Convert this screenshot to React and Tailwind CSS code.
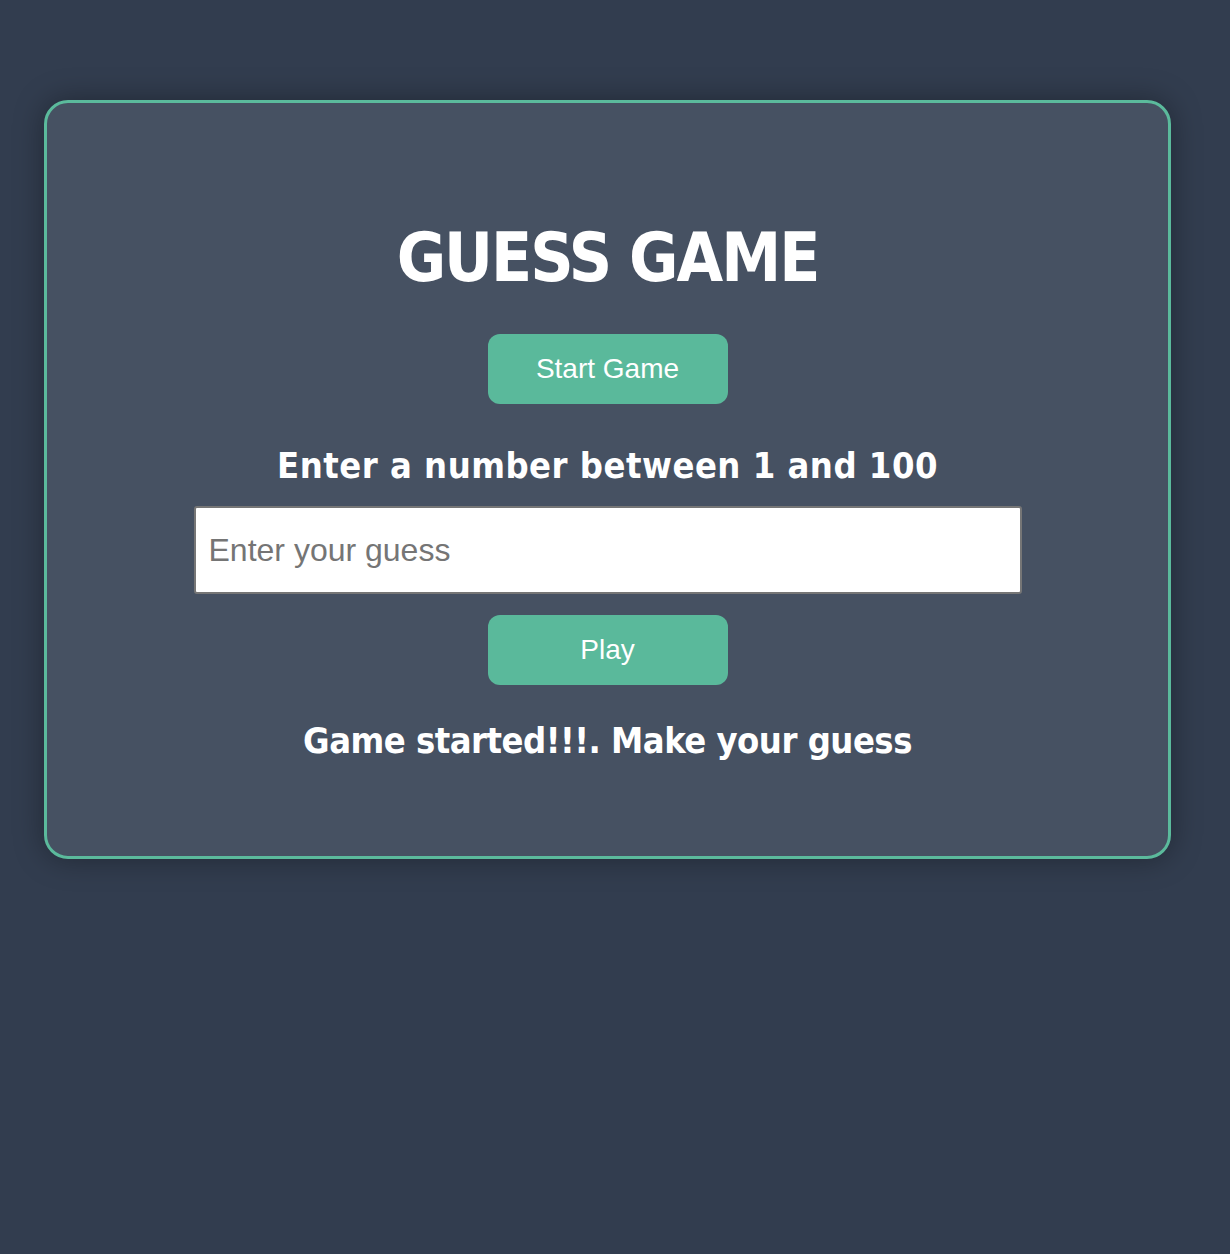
export default function App() {
  return (
    <div className="min-h-[1254px] w-full bg-[#323d4f] pt-[100px] px-[44px]">
      <div className="w-[1127px] h-[759px] rounded-[24px] border-[3px] border-[#5bba9c] bg-[#465162] shadow-[0_0_30px_rgba(0,0,0,0.35)] flex flex-col items-center pt-[115px]">
        <h1
          className="text-white font-bold text-[67px] leading-[80px] tracking-[-2px] m-0"
          style={{ fontFamily: '"DejaVu Sans", sans-serif', fontStretch: "condensed" }}
        >
          GUESS GAME
        </h1>
        <button className="mt-[36px] w-[240px] h-[70px] rounded-[12px] bg-[#5ab99b] text-white text-[28px] font-['Liberation_Sans',Arial,sans-serif]">
          Start Game
        </button>
        <h2
          className="mt-[40px] text-white font-bold text-[36px] leading-[44px] tracking-[0.5px]"
          style={{ fontFamily: '"DejaVu Sans", sans-serif', fontStretch: "condensed" }}
        >
          Enter a number between 1 and 100
        </h2>
        <input
          type="text"
          placeholder="Enter your guess"
          className="mt-[18px] w-[828px] h-[88px] rounded-[3px] border-2 border-[#767676] bg-white px-[13px] text-[32px] text-black placeholder:text-[#757575] font-['Liberation_Sans',Arial,sans-serif] outline-none"
        />
        <button className="mt-[21px] w-[240px] h-[70px] rounded-[12px] bg-[#5ab99b] text-white text-[28px] font-['Liberation_Sans',Arial,sans-serif]">
          Play
        </button>
        <h2
          className="mt-[34px] text-white font-bold text-[36px] leading-[44px] tracking-[-0.5px]"
          style={{ fontFamily: '"DejaVu Sans", sans-serif', fontStretch: "condensed" }}
        >
          Game started!!!. Make your guess
        </h2>
      </div>
    </div>
  );
}
